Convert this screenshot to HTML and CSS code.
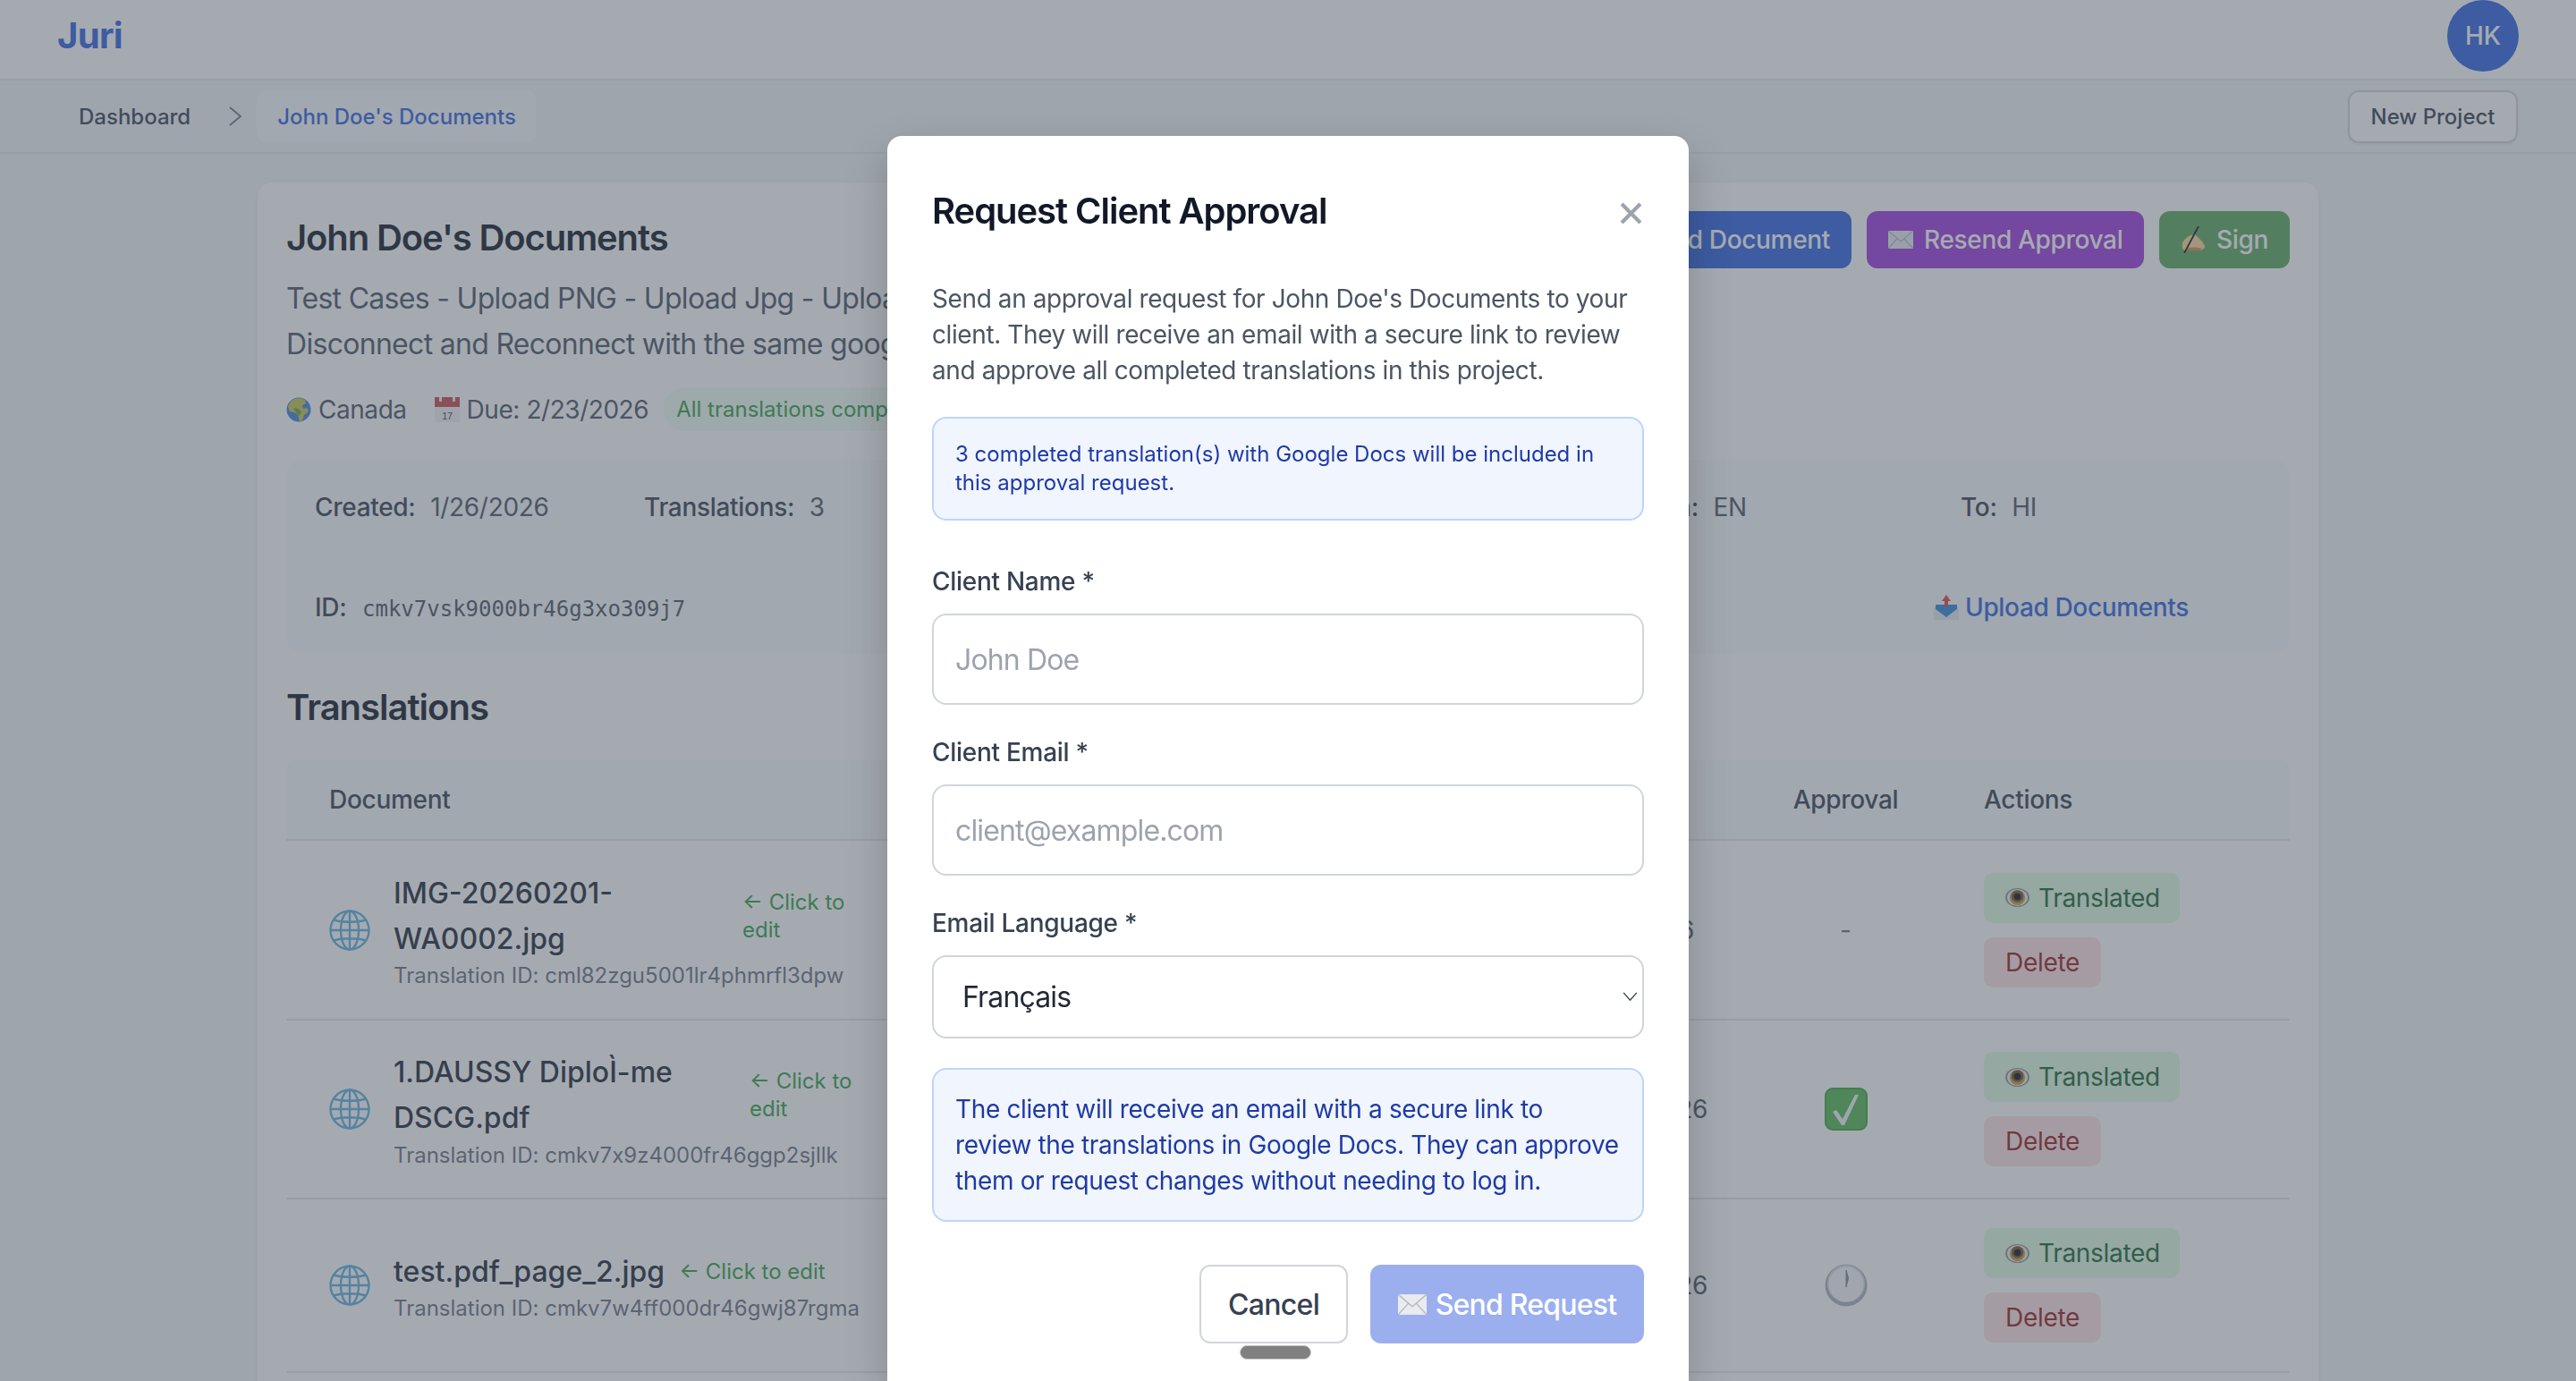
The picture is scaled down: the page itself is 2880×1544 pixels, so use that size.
FILE: index.html
```html
<!DOCTYPE html>
<html lang="en">
<head>
<meta charset="utf-8">
<title>Juri - John Doe's Documents</title>
<link rel="stylesheet" href="styles.css">
</head>
<body>
<svg class="defs" width="0" height="0" aria-hidden="true">
  <symbol id="i-earth" viewBox="0 0 28 28">
    <circle cx="14" cy="14" r="13.500" fill="#3b82e0"/>
    <path d="M9 2c4-1.500 9-1 12 1l1 4-4 2 1 4 4-1 2 3c-1 2-3 4-5 5l-2 6-3 1-2-7-4-3-5-1-2-5c1-4 3-7 7-9z" fill="#c9c24a"/>
    <path d="M8 12l6 1 3 4-3 4-3-3z" fill="#6aa63c"/>
  </symbol>
  <symbol id="i-cal" viewBox="0 0 28 28">
    <rect x="0" y="0" width="28" height="28" fill="#f2f2f4"/>
    <rect x="0" y="0" width="28" height="11" fill="#c94a4f"/>
    <rect x="5" y="0" width="3" height="5" fill="#f2f2f4"/>
    <rect x="20" y="0" width="3" height="5" fill="#f2f2f4"/>
    <text x="14" y="24.500" text-anchor="middle" class="cal-num">17</text>
  </symbol>
  <symbol id="i-mail" viewBox="0 0 28 20">
    <rect x="0" y="0" width="28" height="20" fill="#e9ebef"/>
    <path d="M0 0l14 12L28 0M0 20l10-11M28 20L18 9" fill="none" stroke="#b4b8c2" stroke-width="1.200"/>
  </symbol>
  <symbol id="i-sign" viewBox="0 0 28 30">
    <path d="M2 19c1-4 6-8 10-9l4-1 8 8 3 5c0 3-3 5-8 5H6c-3 0-5-2-4-8z" fill="#fbd690"/>
    <path d="M5 26c5-3 11-3 19-1l-3 2H7z" fill="#d98a4a"/>
    <path d="M20 0L4 30" stroke="#141416" stroke-width="1.800" fill="none"/>
  </symbol>
  <symbol id="i-tray" viewBox="0 0 28 28">
    <rect x="0" y="14" width="28" height="14" rx="1" fill="#e6e8ec"/>
    <path d="M2 11h24v5l-12 9-12-9z" fill="#2f86d8"/>
    <path d="M14 0l5 7h-3v6h-4V7H9z" fill="#e0443e"/>
  </symbol>
  <symbol id="i-eye" viewBox="0 0 28 22">
    <ellipse cx="14" cy="11" rx="14" ry="11" fill="#8d8f96"/>
    <ellipse cx="14" cy="11" rx="12" ry="10" fill="#eceef0"/>
    <circle cx="14" cy="11" r="9" fill="#c8982f"/>
    <circle cx="14" cy="9.500" r="7" fill="#6b5138"/>
    <circle cx="14" cy="10" r="4" fill="#121214"/>
  </symbol>
  <symbol id="i-check" viewBox="0 0 48 48">
    <rect width="48" height="48" rx="9" fill="#3fa53f"/>
    <rect x="2" y="2" width="44" height="44" rx="7" fill="#52b952"/>
    <path d="M9 27l4-2 7 10L34 8h4L22 42h-3z" fill="#f4f5f7"/>
  </symbol>
  <symbol id="i-clock" viewBox="0 0 48 48">
    <circle cx="24" cy="24" r="23.500" fill="#aab1bd"/>
    <circle cx="24" cy="22" r="21" fill="#d5d9e0"/>
    <circle cx="24" cy="23" r="19.500" fill="#f6f7f9"/>
    <path d="M24 7v19l2.500-10z" fill="#7d8694" stroke="#7d8694" stroke-width="1"/>
  </symbol>
  <symbol id="i-web" viewBox="0 0 46 46">
    <g fill="none" stroke="#5fb0dc" stroke-width="2.400">
      <circle cx="23" cy="23" r="21.500"/>
      <ellipse cx="23" cy="23" rx="10" ry="21.500"/>
      <path d="M23 1.500v43M1.500 23h43M5 11.500c10 3 26 3 36 0M5 34.500c10-3 26-3 36 0"/>
    </g>
  </symbol>
</svg>

<header class="topbar">
  <div class="logo">Juri</div>
  <div class="avatar">HK</div>
</header>

<nav class="crumbbar">
  <div class="crumbs">
    <a class="crumb">Dashboard</a>
    <svg class="crumb-sep" viewBox="0 0 14 22"><path d="M1 1l12 10L1 21" fill="none" stroke="#6b7280" stroke-width="1.800"/></svg>
    <a class="crumb crumb-current">John Doe's Documents</a>
  </div>
  <button class="btn-new">New Project</button>
</nav>

<main class="main">
  <section class="card">
    <div class="head-row">
      <div class="head-left">
        <h1 class="page-title">John Doe's Documents</h1>
        <p class="page-desc">Test Cases - Upload PNG - Upload Jpg - Upload PDF<br>Disconnect and Reconnect with the same google account</p>
        <div class="meta">
          <span class="meta-item"><svg class="ic-28"><use href="#i-earth"/></svg>Canada</span>
          <span class="meta-item"><svg class="ic-28"><use href="#i-cal"/></svg>Due: 2/23/2026</span>
          <span class="meta-badge">All translations completed</span>
        </div>
      </div>
      <div class="head-actions">
        <button class="btn btn-blue">Add Document</button>
        <button class="btn btn-purple"><svg class="ic-mail"><use href="#i-mail"/></svg>Resend Approval</button>
        <button class="btn btn-green"><svg class="ic-sign"><use href="#i-sign"/></svg>Sign</button>
      </div>
    </div>

    <div class="info">
      <div class="info-cell"><b>Created:</b> 1/26/2026</div>
      <div class="info-cell"><b>Translations:</b> 3</div>
      <div class="info-cell"></div>
      <div class="info-cell"></div>
      <div class="info-cell"><b>From:</b> EN</div>
      <div class="info-cell"><b>To:</b> HI</div>
      <div class="info-cell info-id"><b>ID:</b> <code class="mono">cmkv7vsk9000br46g3xo309j7</code></div>
      <a class="upload-link"><svg class="ic-28"><use href="#i-tray"/></svg>Upload Documents</a>
    </div>

    <h2 class="section-title">Translations</h2>

    <div class="table">
      <div class="tr thead">
        <div>Document</div>
        <div></div>
        <div class="center">Approval</div>
        <div>Actions</div>
      </div>

      <div class="tr row-a">
        <div class="doc">
          <svg class="ic-web"><use href="#i-web"/></svg>
          <div class="doc-text">
            <div class="doc-line">
              <div class="doc-name name-a">IMG-20260201-<br>WA0002.jpg</div>
              <div class="doc-hint">← Click to<br>edit</div>
            </div>
            <div class="doc-id">Translation ID: cml82zgu5001lr4phmrfl3dpw</div>
          </div>
        </div>
        <div class="date date-short">2/1/2026</div>
        <div class="center dash">-</div>
        <div class="actions">
          <button class="act act-ok"><svg class="ic-eye"><use href="#i-eye"/></svg>Translated</button>
          <button class="act act-del">Delete</button>
        </div>
      </div>

      <div class="tr row-b">
        <div class="doc">
          <svg class="ic-web"><use href="#i-web"/></svg>
          <div class="doc-text">
            <div class="doc-line">
              <div class="doc-name name-b">1.DAUSSY DiploÌ-me<br>DSCG.pdf</div>
              <div class="doc-hint">← Click to<br>edit</div>
            </div>
            <div class="doc-id">Translation ID: cmkv7x9z4000fr46ggp2sjllk</div>
          </div>
        </div>
        <div class="date">1/26/2026</div>
        <div class="center"><svg class="ic-status"><use href="#i-check"/></svg></div>
        <div class="actions">
          <button class="act act-ok"><svg class="ic-eye"><use href="#i-eye"/></svg>Translated</button>
          <button class="act act-del">Delete</button>
        </div>
      </div>

      <div class="tr row-c">
        <div class="doc">
          <svg class="ic-web"><use href="#i-web"/></svg>
          <div class="doc-text">
            <div class="doc-line">
              <div class="doc-name">test.pdf_page_2.jpg</div>
              <div class="doc-hint">← Click to edit</div>
            </div>
            <div class="doc-id">Translation ID: cmkv7w4ff000dr46gwj87rgma</div>
          </div>
        </div>
        <div class="date">1/26/2026</div>
        <div class="center"><svg class="ic-status"><use href="#i-clock"/></svg></div>
        <div class="actions">
          <button class="act act-ok"><svg class="ic-eye"><use href="#i-eye"/></svg>Translated</button>
          <button class="act act-del">Delete</button>
        </div>
      </div>
    </div>
  </section>
</main>

<div class="overlay">
  <div class="modal">
    <div class="modal-head">
      <h3 class="modal-title">Request Client Approval</h3>
      <svg class="modal-close" viewBox="0 0 24 24"><path d="M2 2l20 20M22 2L2 22" fill="none" stroke="#9ca3af" stroke-width="4"/></svg>
    </div>
    <p class="modal-text">Send an approval request for John Doe's Documents to your client. They will receive an email with a secure link to review and approve all completed translations in this project.</p>
    <div class="note note-small">3 completed translation(s) with Google Docs will be included in this approval request.</div>

    <div class="field field-first">
      <label class="field-label">Client Name *</label>
      <input class="field-input" type="text" placeholder="John Doe">
    </div>
    <div class="field">
      <label class="field-label">Client Email *</label>
      <input class="field-input" type="email" placeholder="client@example.com">
    </div>
    <div class="field">
      <label class="field-label">Email Language *</label>
      <div class="select-wrap">
        <select class="field-select"><option>Français</option></select>
        <svg class="select-chev" viewBox="0 0 18 12"><path d="M1 1l8 9 8-9" fill="none" stroke="#374151" stroke-width="1.500"/></svg>
      </div>
    </div>

    <div class="note note-large">The client will receive an email with a secure link to review the translations in Google Docs. They can approve them or request changes without needing to log in.</div>

    <div class="modal-actions">
      <button class="btn-cancel">Cancel</button>
      <button class="btn-send"><svg class="ic-send"><use href="#i-mail"/></svg>Send Request</button>
      <span class="drag-handle"></span>
    </div>
  </div>
</div>
</body>
</html>
```

FILE: styles.css
```css
* { box-sizing: border-box; }
html, body { margin: 0; height: 100%; overflow: hidden; }
body {
  background: #f3f4f6;
  font-family: Inter, "Liberation Sans", sans-serif;
  color: #374151;
}
button { font-family: inherit; cursor: pointer; }
.defs { position: absolute; }
.cal-num { font: 11px "Liberation Sans", sans-serif; fill: #444; }

.topbar {
  height: 90px;
  background: #fff;
  border-bottom: 2px solid #e5e7eb;
  padding: 0 64px 0 64px;
  display: flex;
  justify-content: space-between;
  align-items: flex-start;
}
.logo { font-size: 40px; font-weight: 700; line-height: 80px; color: #2e62df; letter-spacing: -.7px; }
.avatar {
  width: 80px; height: 80px; border-radius: 50%;
  background: #2e62df; color: #fff;
  display: flex; align-items: center; justify-content: center;
  font-size: 28px; font-weight: 500;
}

.crumbbar {
  height: 82px;
  background: #f3f4f6;
  border-bottom: 2px solid #e5e7eb;
  padding: 0 65px 0 64px;
  display: flex;
  justify-content: space-between;
  align-items: center;
}
.crumbs { display: flex; align-items: center; }
.crumb { font-size: 24px; font-weight: 500; line-height: 56px; padding: 2px 24px 0; color: #374151; }
.crumb-current { color: #2e62df; background: #f9fafb; border-radius: 12px; padding: 2px 23px 0; margin-left: -1px; }
.crumb-sep { width: 14px; height: 22px; margin: 0 18px 0 19px; }
.btn-new {
  width: 190px; height: 59px;
  background: #fff; border: 2px solid #d1d5db; border-radius: 12px;
  font-size: 24px; font-weight: 500; color: #374151;
  box-shadow: 0 2px 2px rgba(0,0,0,.05);
}

.main { width: 2304px; margin: 32px auto 0; }
.card {
  background: #fff;
  border-radius: 16px 16px 0 0;
  padding: 32px 32px 0 32px;
  box-shadow: 0 2px 6px rgba(0,0,0,.06);
  min-height: 1400px;
}
.head-row { display: flex; justify-content: space-between; align-items: flex-start; }
.head-left { min-width: 0; }
.page-title { margin: 0; font-size: 40px; font-weight: 600; line-height: 60px; color: #111827; letter-spacing: -1.1px; }
.page-desc { margin: 12px 0 0; font-size: 32px; line-height: 51.200px; color: #4b5563; white-space: nowrap; letter-spacing: -.7px; }
.meta { display: flex; align-items: center; margin-top: 23px; height: 49px; }
.meta-item { display: flex; align-items: center; gap: 8px; font-size: 28px; color: #4b5563; margin-right: 31px; letter-spacing: -.45px; }
.meta-item + .meta-item { margin-right: 17px; }
.meta-badge {
  font-size: 24px; line-height: 49px; padding: 0 14px; border-radius: 24px;
  background: #f0fdf4; color: #2ea043; white-space: nowrap;
}
.ic-28 { width: 28px; height: 28px; flex: none; }

.head-actions { display: flex; gap: 17px; }
.btn {
  height: 64px; border: 0; border-radius: 12px; color: #fff;
  font-size: 28px; font-weight: 500; padding: 0 24px;
  display: flex; align-items: center; white-space: nowrap; letter-spacing: -.33px;
}
.btn-blue { background: #2e62df; }
.btn-purple { background: #9c38dc; width: 310px; }
.btn-green { background: #5aa85c; width: 146px; }
.ic-mail { width: 28px; height: 20px; margin-right: 12px; flex: none; }
.ic-sign { width: 28px; height: 30px; margin-right: 12px; flex: none; }

.info {
  margin-top: 33px;
  background: #f9fafb;
  border-radius: 16px;
  padding: 32px;
  height: 215px;
  display: grid;
  grid-template-columns: repeat(6, 1fr);
  grid-template-rows: 40px 40px;
  column-gap: 32px;
  row-gap: 72px;
  font-size: 28px;
  line-height: 40px;
  color: #4b5563;
  letter-spacing: -.3px;
}
.info-cell b { font-weight: 500; color: #374151; margin-right: 9px; }
.info-id { grid-column: 1 / 6; }
.mono { font-family: "DejaVu Sans Mono", "Liberation Mono", monospace; font-size: 24px; color: #4b5563; margin-left: 1px; letter-spacing: 0; }
.upload-link {
  grid-column: 6; margin-left: -30px;
  display: flex; align-items: center; gap: 7px;
  color: #2e62df; font-weight: 500; white-space: nowrap; letter-spacing: -.35px;
}

.section-title { margin: 31px 0 29px; font-size: 40px; font-weight: 600; line-height: 60px; color: #111827; letter-spacing: -1px; }

.tr {
  display: grid;
  grid-template-columns: 1fr auto 115px 342px;
  column-gap: 97px;
  align-items: center;
  padding-left: 48px;
  border-bottom: 2px solid #e5e7eb;
}
.thead { height: 90px; background: #f9fafb; font-size: 28px; font-weight: 500; color: #374151; border-radius: 12px 12px 0 0; letter-spacing: -.3px; }
.row-a { height: 201px; }
.row-b { height: 200px; }
.row-c { height: 194px; }
.center { text-align: center; display: flex; justify-content: center; }
.dash { color: #6b7280; font-size: 28px; }
.date { font-size: 28px; color: #4b5563; letter-spacing: -.3px; }
.date-short { padding-right: 15px; }

.doc { display: flex; align-items: center; gap: 26px; min-width: 0; }
.ic-web { width: 46px; height: 46px; flex: none; }
.doc-line { display: flex; align-items: center; gap: 16px; }
.doc-name { font-size: 32px; font-weight: 500; line-height: 51.200px; color: #1f2937; white-space: nowrap; }
.name-a { width: 374px; }
.name-b { width: 382px; }
.doc-hint { font-size: 24px; line-height: 31px; color: #2ea043; white-space: nowrap; }
.doc-id { font-size: 24px; line-height: 32px; color: #6b7280; white-space: nowrap; font-feature-settings: "calt" 0; }
.ic-status { width: 48px; height: 48px; }

.actions { display: flex; flex-direction: column; align-items: flex-start; gap: 16px; }
.act {
  height: 56px; border: 0; border-radius: 10px; padding: 0 24px;
  font-size: 28px; display: flex; align-items: center; white-space: nowrap; letter-spacing: -.3px;
}
.act-ok { background: #dffbdf; color: #166534; width: 219px; }
.act-del { background: #fee2e2; color: #991b1b; width: 131px; }
.ic-eye { width: 27px; height: 21px; margin-right: 10px; flex: none; }

.overlay {
  position: fixed; inset: 0;
  background: rgba(75, 85, 99, .5);
  display: flex; justify-content: center; align-items: flex-start;
  padding: 152px 0 0 0;
}
.modal {
  width: 896px; height: 1392px;
  background: #fff;
  border-radius: 16px 16px 0 0;
  padding: 55px 50px 0 50px;
  flex: none;
  box-shadow: 0 20px 50px rgba(0,0,0,.2);
}
.modal-head { display: flex; justify-content: space-between; align-items: center; height: 56px; }
.modal-title { margin: 0; font-size: 40px; font-weight: 600; color: #111827; letter-spacing: -1.05px; white-space: nowrap; }
.modal-close { width: 25px; height: 25px; margin-top: 6px; margin-right: 2px; }
.modal-text { margin: 51px 0 32px; font-size: 28px; line-height: 40px; color: #4b5563; letter-spacing: -.4px; }
.note {
  background: #f0f5fe; border: 2px solid #bdd5fa; border-radius: 16px;
  color: #1f3aa6; padding: 24px;
}
.note-small { font-size: 24px; line-height: 32px; }
.note-large { font-size: 28px; line-height: 40px; margin-top: 33px; letter-spacing: -.36px; }
.field { margin-top: 33px; }
.field-first { margin-top: 48px; }
.field-label { display: block; font-size: 28px; font-weight: 500; line-height: 40px; color: #374151; margin-bottom: 16px; letter-spacing: -.28px; }
.field-input {
  display: block; width: 100%; height: 102px;
  border: 2px solid #d1d5db; border-radius: 16px;
  padding: 0 24px; font: 32px Inter, sans-serif; color: #111827;
  background: #fff; outline: 0; letter-spacing: -.85px;
}
.field-input::placeholder { color: #9ca3af; opacity: 1; }
.select-wrap { position: relative; }
.field-select {
  display: block; width: 100%; height: 93px;
  border: 2px solid #d1d5db; border-radius: 16px;
  padding: 0 32px; font: 32px Inter, sans-serif; color: #1f2937;
  background: #fff; appearance: none; outline: 0; letter-spacing: -.85px;
}
.select-chev { position: absolute; right: 7px; top: 41px; width: 17px; height: 11px; }

.modal-actions { position: relative; display: flex; justify-content: flex-end; gap: 25px; margin-top: 48px; }
.btn-cancel {
  width: 166px; height: 88px; background: #fff;
  border: 2px solid #d1d5db; border-radius: 12px;
  font-size: 32px; font-weight: 500; color: #374151; letter-spacing: -.7px;
}
.btn-send {
  width: 306px; height: 88px; background: #9bafef; border: 0; border-radius: 12px;
  font-size: 32px; font-weight: 500; color: #fff;
  display: flex; align-items: center; justify-content: center; white-space: nowrap; letter-spacing: -.8px;
}
.ic-send { width: 32px; height: 23px; margin-right: 10px; flex: none; }
.drag-handle {
  position: absolute; left: 344px; top: 90px;
  width: 80px; height: 16px; border-radius: 8px;
  background: #808080; border: 1px solid #c8c8c8;
}
```
